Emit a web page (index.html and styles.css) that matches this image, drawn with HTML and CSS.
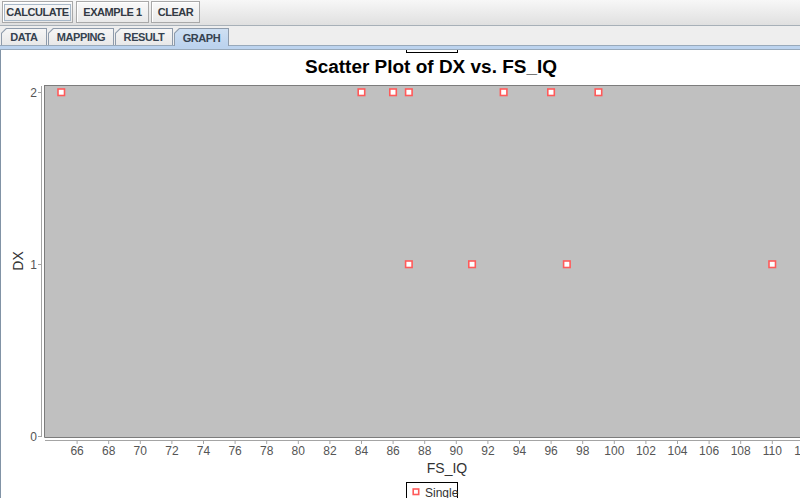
FILE: index.html
```html
<!DOCTYPE html>
<html>
<head>
<meta charset="utf-8">
<title>Scatter Plot</title>
<link rel="stylesheet" href="styles.css">
</head>
<body>
<div class="app">
  <div class="toolbar">
    <button class="btn btn-calc"><span class="focus">CALCULATE</span></button>
    <button class="btn btn-example">EXAMPLE 1</button>
    <button class="btn btn-clear">CLEAR</button>
  </div>
  <div class="tabbar">
    <div class="tab tab-data"><div class="tab-in">DATA</div></div>
    <div class="tab tab-mapping"><div class="tab-in">MAPPING</div></div>
    <div class="tab tab-result"><div class="tab-in">RESULT</div></div>
    <div class="tab tab-graph selected"><div class="tab-in">GRAPH</div></div>
  </div>
  <div class="band"></div>
  <div class="content">
    <svg class="chart" width="799" height="448" viewBox="1 50 799 448" xmlns="http://www.w3.org/2000/svg">
      <!-- cut-off top legend -->
      <rect x="406.5" y="40.5" width="51" height="12" fill="none" stroke="#000" stroke-width="1"/>
      <!-- title -->
      <text class="title" x="431" y="73" text-anchor="middle" textLength="252" lengthAdjust="spacingAndGlyphs">Scatter Plot of DX vs. FS_IQ</text>
      <!-- plot area -->
      <rect x="45" y="85" width="760" height="352" fill="#c0c0c0"/>
      <path d="M44.5 85 V437.5 H805 M44.5 85.5 H805" fill="none" stroke="#7c7c7c" stroke-width="1"/>
      <!-- axes -->
      <path d="M41.5 86 V437" fill="none" stroke="#a4a4a4" stroke-width="1"/>
      <path d="M45 440.5 H805" fill="none" stroke="#a4a4a4" stroke-width="1"/>
      <path d="M38 92.5 H41 M38 264.5 H41 M38 436.5 H41" fill="none" stroke="#a4a4a4" stroke-width="1"/>
      <path d="M77.1 441 V444 M108.7 441 V444 M140.3 441 V444 M171.9 441 V444 M203.5 441 V444 M235.1 441 V444 M266.7 441 V444 M298.3 441 V444 M329.9 441 V444 M361.5 441 V444 M393.1 441 V444 M424.7 441 V444 M456.3 441 V444 M487.9 441 V444 M519.5 441 V444 M551.1 441 V444 M582.7 441 V444 M614.3 441 V444 M645.9 441 V444 M677.5 441 V444 M709.1 441 V444 M740.7 441 V444 M772.3 441 V444" fill="none" stroke="#a4a4a4" stroke-width="1"/>
      <!-- y labels -->
      <g class="tick" text-anchor="end">
        <text x="37" y="96.5">2</text>
        <text x="37" y="268.5">1</text>
        <text x="37" y="440.5">0</text>
      </g>
      <!-- x labels -->
      <g class="tick" text-anchor="middle">
        <text x="77.1" y="455">66</text>
        <text x="108.7" y="455">68</text>
        <text x="140.3" y="455">70</text>
        <text x="171.9" y="455">72</text>
        <text x="203.5" y="455">74</text>
        <text x="235.1" y="455">76</text>
        <text x="266.7" y="455">78</text>
        <text x="298.3" y="455">80</text>
        <text x="329.9" y="455">82</text>
        <text x="361.5" y="455">84</text>
        <text x="393.1" y="455">86</text>
        <text x="424.7" y="455">88</text>
        <text x="456.3" y="455">90</text>
        <text x="487.9" y="455">92</text>
        <text x="519.5" y="455">94</text>
        <text x="551.1" y="455">96</text>
        <text x="582.7" y="455">98</text>
        <text x="614.3" y="455">100</text>
        <text x="645.9" y="455">102</text>
        <text x="677.5" y="455">104</text>
        <text x="709.1" y="455">106</text>
        <text x="740.7" y="455">108</text>
        <text x="772.3" y="455">110</text>
        <text x="803.9" y="455">112</text>
      </g>
      <!-- axis labels -->
      <text class="axis-label" x="447" y="473" text-anchor="middle">FS_IQ</text>
      <text class="axis-label" x="23" y="261" text-anchor="middle" transform="rotate(-90 23 261)">DX</text>
      <!-- data points -->
      <g class="pts">
        <rect x="58" y="89" width="6.5" height="6.5"/>
        <rect x="358.2" y="89" width="6.5" height="6.5"/>
        <rect x="389.8" y="89" width="6.5" height="6.5"/>
        <rect x="405.6" y="89" width="6.5" height="6.5"/>
        <rect x="500.4" y="89" width="6.5" height="6.5"/>
        <rect x="547.8" y="89" width="6.5" height="6.5"/>
        <rect x="595.2" y="89" width="6.5" height="6.5"/>
        <rect x="405.6" y="261" width="6.5" height="6.5"/>
        <rect x="468.8" y="261" width="6.5" height="6.5"/>
        <rect x="563.6" y="261" width="6.5" height="6.5"/>
        <rect x="769" y="261" width="6.5" height="6.5"/>
      </g>
      <!-- bottom legend -->
      <rect x="406.5" y="482.5" width="51" height="20" fill="#fff" stroke="#000" stroke-width="1"/>
      <g class="pts"><rect x="413.2" y="489" width="5.5" height="5.5"/></g>
      <text class="legend" x="425" y="497">Single</text>
    </svg>
  </div>
</div>
</body>
</html>
```
FILE: styles.css
```css
html, body {
  margin: 0;
  padding: 0;
}
body {
  width: 800px;
  height: 498px;
  overflow: hidden;
  background: #eeeeee;
  font-family: "Liberation Sans", Arial, sans-serif;
}
.app {
  display: flex;
  flex-direction: column;
  height: 498px;
}
.toolbar {
  box-sizing: border-box;
  height: 26px;
  display: flex;
  align-items: flex-start;
  padding: 1px 0 0 2px;
  background: linear-gradient(#f7f7f7, #e0e0e0);
  border-bottom: 1px solid #a7b0b8;
}
.btn {
  box-sizing: border-box;
  height: 22px;
  margin: 0;
  padding: 0;
  border: 1px solid #a9a9a9;
  background: linear-gradient(#f9f9f9, #e9e9e9);
  box-shadow: inset 1px 1px 0 #ffffff;
  font-family: "Liberation Sans", Arial, sans-serif;
  font-weight: bold;
  font-size: 11px;
  letter-spacing: -0.45px;
  color: #333a44;
  display: flex;
  align-items: center;
  justify-content: center;
}
.btn-calc { width: 71px; }
.btn-example { width: 73px; margin-left: 3px; }
.btn-clear { width: 49px; margin-left: 2px; }
.focus {
  display: flex;
  align-items: center;
  justify-content: center;
  box-sizing: border-box;
  width: 67px;
  height: 17px;
  border: 1px solid #a8b8c8;
}
.tabbar {
  box-sizing: border-box;
  height: 19px;
  display: flex;
  align-items: flex-end;
  gap: 1px;
  padding: 2px 0 0 1px;
  background: #eeeeee;
}
.tab {
  box-sizing: border-box;
  height: 17px;
  padding: 1px 1px 0 1px;
  background: #8e9bab;
  clip-path: polygon(5px 0, 100% 0, 100% 100%, 0 100%, 0 5px);
}
.tab-in {
  height: 100%;
  display: flex;
  align-items: center;
  justify-content: center;
  background: linear-gradient(#f6f6f6, #e8e8e8);
  clip-path: polygon(4.6px 0, 100% 0, 100% 100%, 0 100%, 0 4.6px);
  font-weight: bold;
  font-size: 11px;
  letter-spacing: -0.4px;
  color: #354250;
}
.tab-data { width: 46px; }
.tab-mapping { width: 66px; }
.tab-result { width: 58px; }
.tab-graph { width: 55px; }
.tab.selected {
  height: 18px;
  margin-bottom: -1px;
  position: relative;
  z-index: 1;
}
.tab.selected .tab-in {
  background: linear-gradient(#cfe0f3, #bcd3ee);
}
.band {
  height: 3px;
  background: #bcd3ee;
  border-top: 1px solid #98a9ba;
  border-bottom: 1px solid #98a9ba;
}
.content {
  flex: 1;
  background: #ffffff;
  border-left: 1px solid #8193a6;
  overflow: hidden;
}
.chart {
  display: block;
}
.title {
  font-family: "Liberation Sans", Arial, sans-serif;
  font-weight: bold;
  font-size: 18px;
  fill: #000000;
}
.tick text {
  font-family: "Liberation Sans", Arial, sans-serif;
  font-size: 12px;
  fill: #555555;
}
.axis-label {
  font-family: "Liberation Sans", Arial, sans-serif;
  font-size: 14px;
  fill: #333333;
}
.legend {
  font-family: "Liberation Sans", Arial, sans-serif;
  font-size: 12px;
  fill: #333333;
}
.pts rect {
  fill: #ffffff;
  stroke: #ff5a5a;
  stroke-width: 1.6;
}
```
